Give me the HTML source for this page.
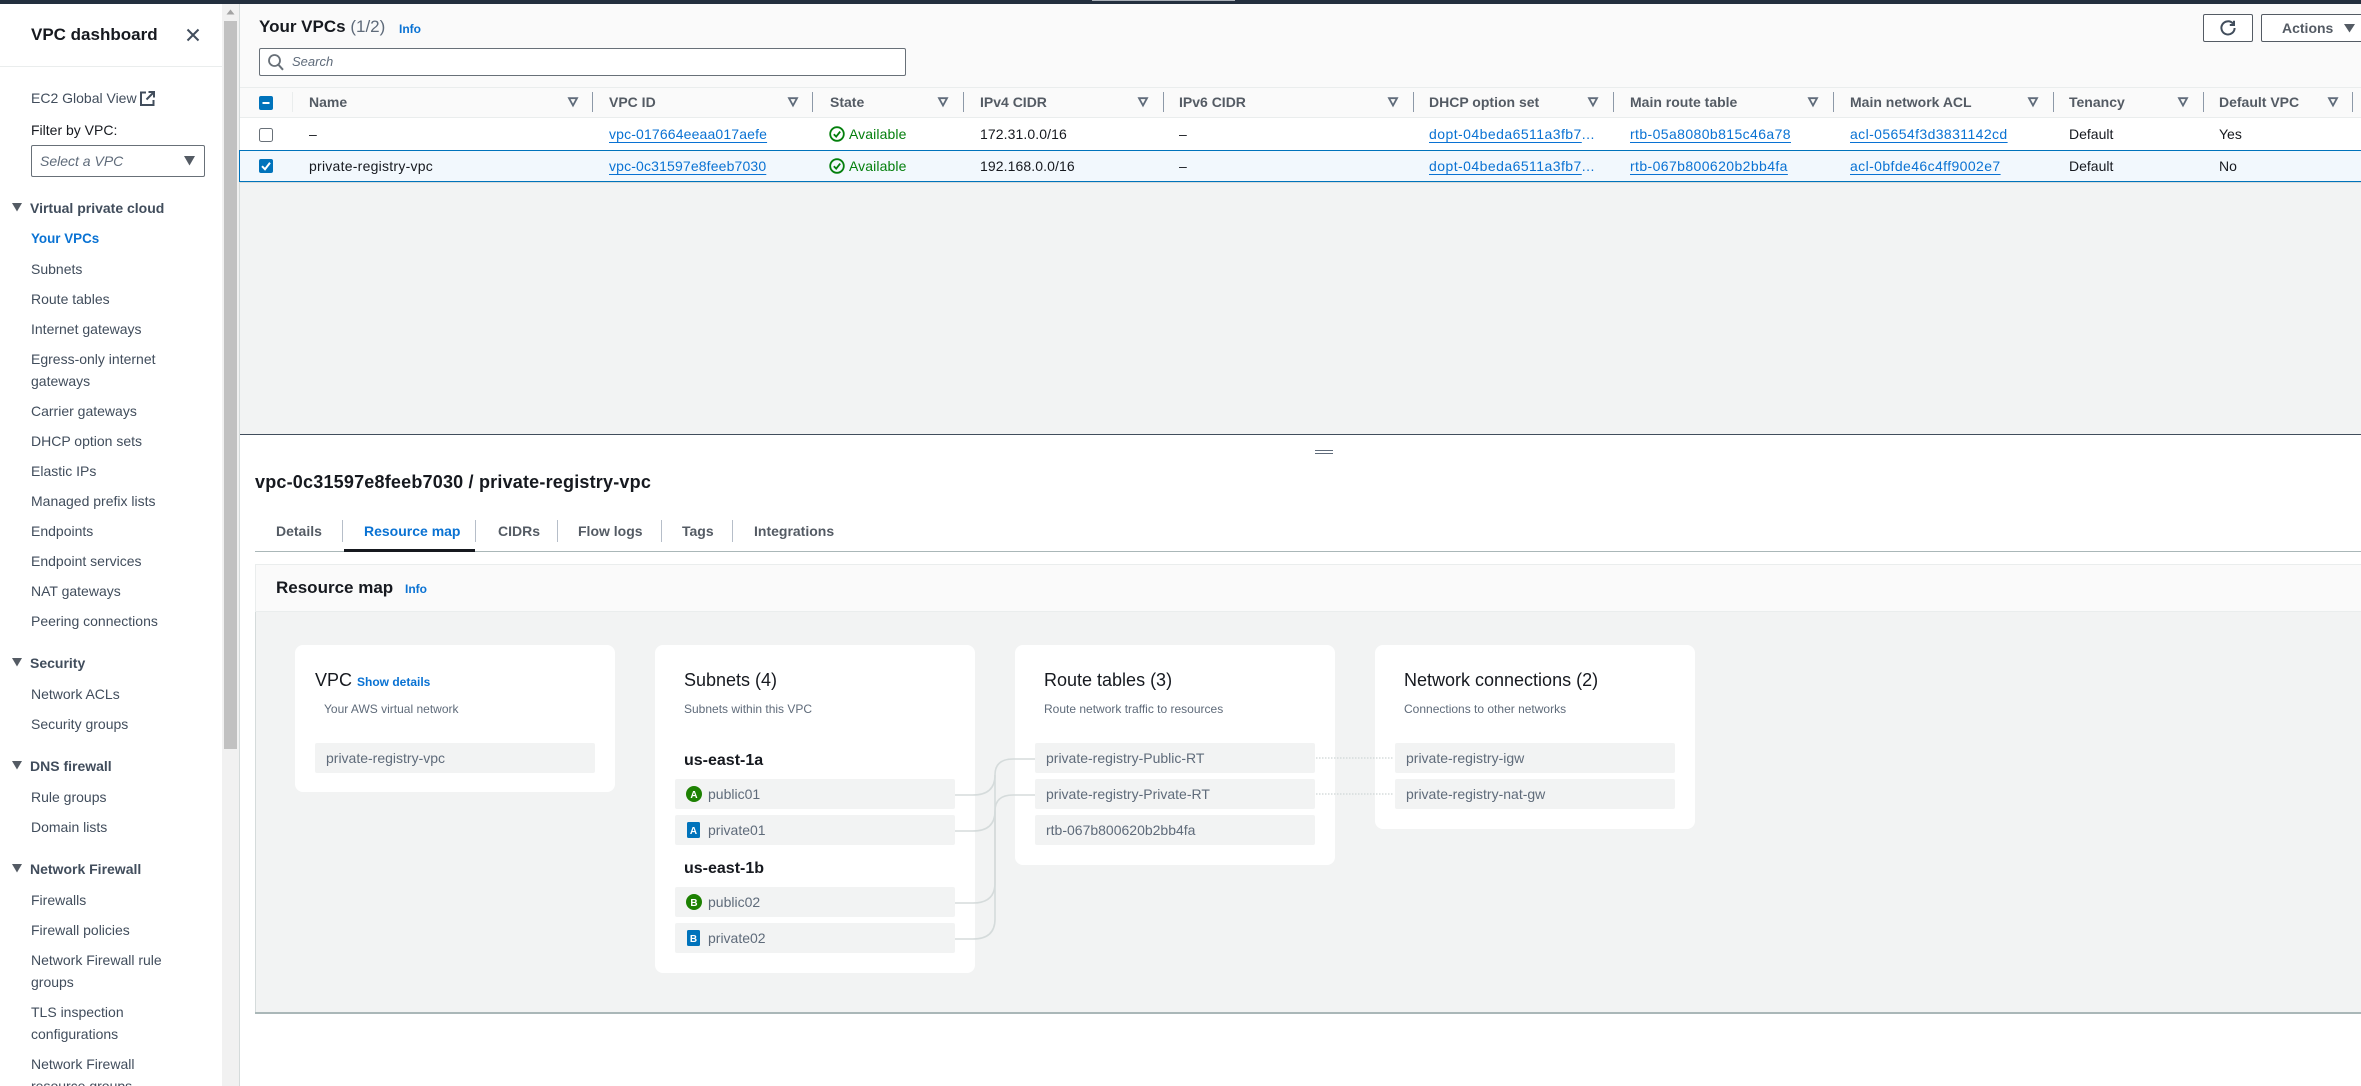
<!DOCTYPE html>
<html lang="en"><head><meta charset="utf-8"><title>Your VPCs</title>
<style>
html,body{margin:0;padding:0;width:2361px;height:1086px;overflow:hidden;background:#fff}
body{position:relative;font-family:"Liberation Sans",Arial,sans-serif;font-size:14px;color:#16191f}
.b{position:absolute}
.t{position:absolute;white-space:nowrap;line-height:20px;height:20px}
.n{color:#414d5c}
.h{font-weight:700;color:#414d5c}
.th{font-weight:700;color:#545b64;top:92px}
a{color:#0972d3;text-decoration:underline;text-underline-offset:3px}
.l{color:#0972d3}
.r1{top:124px}.r2{top:156px}
.ok{color:#037f0c}
.row{position:absolute;background:#f2f3f3;height:30px;border-radius:2px}
.card{position:absolute;background:#fff;border-radius:8px;width:320px}
.rt{color:#5f6b7a}
.ct{font-size:18px;line-height:24px;height:24px;color:#16191f}
.cs{font-size:12px;color:#5f6b7a}
.az{font-size:16px;font-weight:700;color:#16191f}
.sep{position:absolute;top:92px;width:1px;height:20px;background:#8d99a8}
.tsep{position:absolute;top:520px;width:1px;height:22px;background:#b6bec9}
.tab{top:521px;font-weight:700;color:#545b64}
svg{position:absolute;overflow:visible}
</style></head><body>

<!-- top bar -->
<div class="b" style="left:0;top:0;width:2361px;height:4px;background:#232f3e"></div>
<div class="b" style="left:1092px;top:0;width:143px;height:1px;background:#aab0b8"></div>

<!-- sidebar -->
<div class="b" style="left:0;top:4px;width:222px;height:1082px;background:#fff"></div>
<div class="b" style="left:222px;top:4px;width:17px;height:1082px;background:#f1f1f1"></div>
<div class="b" style="left:224px;top:21px;width:13px;height:728px;background:#c1c1c1"></div>
<svg style="left:226px;top:9px" width="9" height="6"><path d="M4.5 0.5L8.5 5.5H0.5Z" fill="#a3a3a3"/></svg>
<div class="b" style="left:239px;top:4px;width:1px;height:1082px;background:#d5dbdb"></div>

<div class="t" style="left:31px;top:25px;font-size:17px;font-weight:700;color:#16191f">VPC dashboard</div>
<svg style="left:186px;top:28px" width="14" height="14"><path d="M1.5 1.5L12.5 12.5M12.5 1.5L1.5 12.5" stroke="#414d5c" stroke-width="2" fill="none"/></svg>
<div class="b" style="left:0;top:66px;width:222px;height:1px;background:#eaeded"></div>

<div class="t n" style="left:31px;top:88px">EC2 Global View</div>
<svg style="left:140px;top:91px" width="15" height="15"><path d="M6 1.5H1V14H13.5V9M8.5 1H14V6.5M14 1L6.5 8.5" stroke="#414d5c" stroke-width="2" fill="none"/></svg>
<div class="t" style="left:31px;top:120px;color:#16191f">Filter by VPC:</div>
<div class="b" style="left:31px;top:145px;width:172px;height:30px;border:1px solid #687078;border-radius:2px;background:#fff"></div>
<div class="t" style="left:40px;top:151px;font-style:italic;color:#5f6b7a">Select a VPC</div>
<svg style="left:184px;top:156px" width="11" height="10"><path d="M0 0H11L5.5 9.5Z" fill="#545b64"/></svg>

<svg style="left:12px;top:203px" width="10" height="9"><path d="M0 0H10L5 8.5Z" fill="#545b64"/></svg>
<div class="t h" style="left:30px;top:198px">Virtual private cloud</div>
<div class="t" style="left:31px;top:229px;color:#0972d3;font-weight:700;font-size:13.4px">Your VPCs</div>
<div class="t n" style="left:31px;top:259px">Subnets</div>
<div class="t n" style="left:31px;top:289px">Route tables</div>
<div class="t n" style="left:31px;top:319px">Internet gateways</div>
<div class="t n" style="left:31px;top:349px">Egress-only internet</div>
<div class="t n" style="left:31px;top:371px">gateways</div>
<div class="t n" style="left:31px;top:401px">Carrier gateways</div>
<div class="t n" style="left:31px;top:431px">DHCP option sets</div>
<div class="t n" style="left:31px;top:461px">Elastic IPs</div>
<div class="t n" style="left:31px;top:491px">Managed prefix lists</div>
<div class="t n" style="left:31px;top:521px">Endpoints</div>
<div class="t n" style="left:31px;top:551px">Endpoint services</div>
<div class="t n" style="left:31px;top:581px">NAT gateways</div>
<div class="t n" style="left:31px;top:611px">Peering connections</div>

<svg style="left:12px;top:658px" width="10" height="9"><path d="M0 0H10L5 8.5Z" fill="#545b64"/></svg>
<div class="t h" style="left:30px;top:653px">Security</div>
<div class="t n" style="left:31px;top:684px">Network ACLs</div>
<div class="t n" style="left:31px;top:714px">Security groups</div>

<svg style="left:12px;top:761px" width="10" height="9"><path d="M0 0H10L5 8.5Z" fill="#545b64"/></svg>
<div class="t h" style="left:30px;top:756px">DNS firewall</div>
<div class="t n" style="left:31px;top:787px">Rule groups</div>
<div class="t n" style="left:31px;top:817px">Domain lists</div>

<svg style="left:12px;top:864px" width="10" height="9"><path d="M0 0H10L5 8.5Z" fill="#545b64"/></svg>
<div class="t h" style="left:30px;top:859px">Network Firewall</div>
<div class="t n" style="left:31px;top:890px">Firewalls</div>
<div class="t n" style="left:31px;top:920px">Firewall policies</div>
<div class="t n" style="left:31px;top:950px">Network Firewall rule</div>
<div class="t n" style="left:31px;top:972px">groups</div>
<div class="t n" style="left:31px;top:1002px">TLS inspection</div>
<div class="t n" style="left:31px;top:1024px">configurations</div>
<div class="t n" style="left:31px;top:1054px">Network Firewall</div>
<div class="t n" style="left:31px;top:1076px">resource groups</div>

<!-- top panel -->
<div class="b" style="left:240px;top:4px;width:2121px;height:83px;background:#fafafa"></div>
<div class="t" style="left:259px;top:17px;font-size:17px;font-weight:700;color:#16191f">Your VPCs <span style="font-weight:400;color:#5f6b7a">(1/2)</span></div>
<div class="t" style="left:399px;top:19px;font-size:12px;font-weight:700;color:#0972d3">Info</div>

<div class="b" style="left:2203px;top:14px;width:48px;height:26px;border:1px solid #545b64;border-radius:2px;background:#fff"></div>
<svg style="left:2220px;top:20px" width="16" height="16"><path d="M13 3.6A6.6 6.6 0 1 0 14.6 8" stroke="#414d5c" stroke-width="2" fill="none"/><path d="M14 0.8V5H9.8" stroke="#414d5c" stroke-width="2" fill="none"/></svg>
<div class="b" style="left:2261px;top:14px;width:110px;height:26px;border:1px solid #545b64;border-radius:2px;background:#fff"></div>
<div class="t" style="left:2282px;top:18px;font-weight:700;color:#545b64">Actions</div>
<svg style="left:2344px;top:24px" width="11" height="9"><path d="M0 0H11L5.5 8.5Z" fill="#545b64"/></svg>

<div class="b" style="left:259px;top:48px;width:645px;height:26px;border:1px solid #687078;border-radius:2px;background:#fff"></div>
<svg style="left:268px;top:54px" width="16" height="17"><circle cx="6.5" cy="6.5" r="5.5" stroke="#687078" stroke-width="1.8" fill="none"/><path d="M10.5 10.8L15 15.8" stroke="#687078" stroke-width="2" fill="none"/></svg>
<div class="t" style="left:292px;top:52px;font-style:italic;color:#5f6b7a;font-size:13px">Search</div>

<!-- table -->
<div class="b" style="left:240px;top:87px;width:2121px;height:31px;background:#fafafa;border-top:1px solid #eaeded;border-bottom:1px solid #eaeded;box-sizing:border-box"></div>
<div class="b" style="left:240px;top:118px;width:2121px;height:32px;background:#fff"></div>
<div class="b" style="left:240px;top:182px;width:2121px;height:252px;background:#f2f3f3"></div>
<div class="b" style="left:239px;top:150px;width:2122px;height:32px;background:#f2f8fd;border-top:1.5px solid #0073bb;border-bottom:1.5px solid #0073bb;border-left:1.5px solid #0073bb;box-sizing:border-box"></div>
<div class="b" style="left:240px;top:182px;width:2121px;height:1px;background:#d5dbdb"></div>
<div class="b" style="left:240px;top:434px;width:2121px;height:1px;background:#414d5c"></div>

<svg style="left:259px;top:96px" width="14" height="14"><rect width="14" height="14" rx="2" fill="#0073bb"/><path d="M3.5 7H10.5" stroke="#fff" stroke-width="2"/></svg>
<svg style="left:259px;top:128px" width="14" height="14"><rect x="0.5" y="0.5" width="13" height="13" rx="2" fill="#fff" stroke="#687078"/></svg>
<svg style="left:259px;top:159px" width="14" height="14"><rect width="14" height="14" rx="2" fill="#0073bb"/><path d="M3 7.2L6 10.2L11 3.8" stroke="#fff" stroke-width="2" fill="none"/></svg>
<div class="b" style="left:292px;top:92px;width:1px;height:20px;background:#eaeded"></div>

<div class="t th" style="left:309px">Name</div>
<div class="t th" style="left:609px">VPC ID</div>
<div class="t th" style="left:830px">State</div>
<div class="t th" style="left:980px">IPv4 CIDR</div>
<div class="t th" style="left:1179px">IPv6 CIDR</div>
<div class="t th" style="left:1429px">DHCP option set</div>
<div class="t th" style="left:1630px">Main route table</div>
<div class="t th" style="left:1850px">Main network ACL</div>
<div class="t th" style="left:2069px">Tenancy</div>
<div class="t th" style="left:2219px">Default VPC</div>

<div class="sep" style="left:592px"></div><div class="sep" style="left:812px"></div><div class="sep" style="left:963px"></div><div class="sep" style="left:1163px"></div><div class="sep" style="left:1413px"></div><div class="sep" style="left:1613px"></div><div class="sep" style="left:1833px"></div><div class="sep" style="left:2053px"></div><div class="sep" style="left:2203px"></div><div class="sep" style="left:2352px"></div>

<svg style="left:568px;top:97px" width="10" height="10"><path d="M1 1.2H9L5 8.5Z" stroke="#5f6b7a" stroke-width="1.8" fill="none"/></svg>
<svg style="left:788px;top:97px" width="10" height="10"><path d="M1 1.2H9L5 8.5Z" stroke="#5f6b7a" stroke-width="1.8" fill="none"/></svg>
<svg style="left:938px;top:97px" width="10" height="10"><path d="M1 1.2H9L5 8.5Z" stroke="#5f6b7a" stroke-width="1.8" fill="none"/></svg>
<svg style="left:1138px;top:97px" width="10" height="10"><path d="M1 1.2H9L5 8.5Z" stroke="#5f6b7a" stroke-width="1.8" fill="none"/></svg>
<svg style="left:1388px;top:97px" width="10" height="10"><path d="M1 1.2H9L5 8.5Z" stroke="#5f6b7a" stroke-width="1.8" fill="none"/></svg>
<svg style="left:1588px;top:97px" width="10" height="10"><path d="M1 1.2H9L5 8.5Z" stroke="#5f6b7a" stroke-width="1.8" fill="none"/></svg>
<svg style="left:1808px;top:97px" width="10" height="10"><path d="M1 1.2H9L5 8.5Z" stroke="#5f6b7a" stroke-width="1.8" fill="none"/></svg>
<svg style="left:2028px;top:97px" width="10" height="10"><path d="M1 1.2H9L5 8.5Z" stroke="#5f6b7a" stroke-width="1.8" fill="none"/></svg>
<svg style="left:2178px;top:97px" width="10" height="10"><path d="M1 1.2H9L5 8.5Z" stroke="#5f6b7a" stroke-width="1.8" fill="none"/></svg>
<svg style="left:2328px;top:97px" width="10" height="10"><path d="M1 1.2H9L5 8.5Z" stroke="#5f6b7a" stroke-width="1.8" fill="none"/></svg>

<div class="t r1" style="left:309px">–</div>
<div class="t r1 l" style="left:609px;letter-spacing:.15px"><a>vpc-017664eeaa017aefe</a></div>
<svg style="left:829px;top:126px" width="16" height="16"><circle cx="8" cy="8" r="6.8" stroke="#037f0c" stroke-width="1.8" fill="none"/><path d="M4.8 8.2L7.2 10.6L11.2 5.6" stroke="#037f0c" stroke-width="1.8" fill="none"/></svg>
<div class="t r1 ok" style="left:849px;letter-spacing:.1px">Available</div>
<div class="t r1" style="left:980px;letter-spacing:.1px">172.31.0.0/16</div>
<div class="t r1" style="left:1179px">–</div>
<div class="t r1 l" style="left:1429px;letter-spacing:.45px"><a>dopt-04beda6511a3fb7</a>...</div>
<div class="t r1 l" style="left:1630px;letter-spacing:.4px"><a>rtb-05a8080b815c46a78</a></div>
<div class="t r1 l" style="left:1850px;letter-spacing:.4px"><a>acl-05654f3d3831142cd</a></div>
<div class="t r1" style="left:2069px">Default</div>
<div class="t r1" style="left:2219px">Yes</div>

<div class="t r2" style="left:309px;letter-spacing:.25px">private-registry-vpc</div>
<div class="t r2 l" style="left:609px;letter-spacing:.15px"><a>vpc-0c31597e8feeb7030</a></div>
<svg style="left:829px;top:158px" width="16" height="16"><circle cx="8" cy="8" r="6.8" stroke="#037f0c" stroke-width="1.8" fill="none"/><path d="M4.8 8.2L7.2 10.6L11.2 5.6" stroke="#037f0c" stroke-width="1.8" fill="none"/></svg>
<div class="t r2 ok" style="left:849px;letter-spacing:.1px">Available</div>
<div class="t r2" style="left:980px;letter-spacing:.1px">192.168.0.0/16</div>
<div class="t r2" style="left:1179px">–</div>
<div class="t r2 l" style="left:1429px;letter-spacing:.45px"><a>dopt-04beda6511a3fb7</a>...</div>
<div class="t r2 l" style="left:1630px;letter-spacing:.4px"><a>rtb-067b800620b2bb4fa</a></div>
<div class="t r2 l" style="left:1850px;letter-spacing:.4px"><a>acl-0bfde46c4ff9002e7</a></div>
<div class="t r2" style="left:2069px">Default</div>
<div class="t r2" style="left:2219px">No</div>

<!-- split handle -->
<div class="b" style="left:1315px;top:450px;width:18px;height:1px;background:#5f6b7a"></div>
<div class="b" style="left:1315px;top:453px;width:18px;height:1px;background:#5f6b7a"></div>

<!-- detail -->
<div class="t" style="left:255px;top:472px;font-size:18px;font-weight:700;letter-spacing:.2px;color:#16191f">vpc-0c31597e8feeb7030 / private-registry-vpc</div>

<div class="t tab" style="left:276px">Details</div>
<div class="tsep" style="left:342px"></div>
<div class="t tab" style="left:364px;color:#0972d3">Resource map</div>
<div class="tsep" style="left:475px"></div>
<div class="t tab" style="left:498px">CIDRs</div>
<div class="tsep" style="left:557px"></div>
<div class="t tab" style="left:578px">Flow logs</div>
<div class="tsep" style="left:661px"></div>
<div class="t tab" style="left:682px">Tags</div>
<div class="tsep" style="left:732px"></div>
<div class="t tab" style="left:754px">Integrations</div>
<div class="b" style="left:255px;top:551px;width:2106px;height:1px;background:#aab7b8"></div>
<div class="b" style="left:344px;top:549px;width:131px;height:3px;background:#16191f"></div>

<!-- resource map container -->
<div class="b" style="left:255px;top:564px;width:2106px;height:449px;background:#f2f3f3;box-sizing:border-box;border-left:1px solid #d5dbdb"></div>
<div class="b" style="left:255px;top:564px;width:2106px;height:48px;background:#fafafa;box-sizing:border-box;border:1px solid #eaeded;border-right:none"></div>
<div class="b" style="left:255px;top:1012px;width:2106px;height:2px;background:#aab7b8"></div>
<div class="t" style="left:276px;top:578px;font-size:17px;font-weight:700;color:#16191f">Resource map</div>
<div class="t" style="left:405px;top:579px;font-size:12px;font-weight:700;color:#0972d3">Info</div>

<!-- cards -->
<div class="card" style="left:295px;top:645px;height:147px"></div>
<div class="card" style="left:655px;top:645px;height:328px"></div>
<div class="card" style="left:1015px;top:645px;height:220px"></div>
<div class="card" style="left:1375px;top:645px;height:184px"></div>

<div class="t ct" style="left:315px;top:668px">VPC</div>
<div class="t" style="left:357px;top:672px;font-size:12px;font-weight:700;color:#0972d3">Show details</div>
<div class="t cs" style="left:324px;top:699px">Your AWS virtual network</div>
<div class="row" style="left:315px;top:743px;width:280px"></div>
<div class="t rt" style="left:326px;top:748px">private-registry-vpc</div>

<div class="t ct" style="left:684px;top:668px">Subnets (4)</div>
<div class="t cs" style="left:684px;top:699px">Subnets within this VPC</div>
<div class="t az" style="left:684px;top:751px">us-east-1a</div>
<div class="row" style="left:675px;top:779px;width:280px"></div>
<div class="row" style="left:675px;top:815px;width:280px"></div>
<div class="t az" style="left:684px;top:859px">us-east-1b</div>
<div class="row" style="left:675px;top:887px;width:280px"></div>
<div class="row" style="left:675px;top:923px;width:280px"></div>
<div class="t rt" style="left:708px;top:784px">public01</div>
<div class="t rt" style="left:708px;top:820px">private01</div>
<div class="t rt" style="left:708px;top:892px">public02</div>
<div class="t rt" style="left:708px;top:928px">private02</div>
<svg style="left:686px;top:786px" width="16" height="16"><circle cx="8" cy="8" r="8" fill="#1d8102"/><text x="8" y="12" font-family="Liberation Sans" font-size="10" font-weight="700" fill="#fff" text-anchor="middle">A</text></svg>
<svg style="left:687px;top:822px" width="13" height="16"><rect width="13" height="16" rx="1.5" fill="#0073bb"/><text x="6.5" y="12" font-family="Liberation Sans" font-size="10" font-weight="700" fill="#fff" text-anchor="middle">A</text></svg>
<svg style="left:686px;top:894px" width="16" height="16"><circle cx="8" cy="8" r="8" fill="#1d8102"/><text x="8" y="12" font-family="Liberation Sans" font-size="10" font-weight="700" fill="#fff" text-anchor="middle">B</text></svg>
<svg style="left:687px;top:930px" width="13" height="16"><rect width="13" height="16" rx="1.5" fill="#0073bb"/><text x="6.5" y="12" font-family="Liberation Sans" font-size="10" font-weight="700" fill="#fff" text-anchor="middle">B</text></svg>

<div class="t ct" style="left:1044px;top:668px">Route tables (3)</div>
<div class="t cs" style="left:1044px;top:699px">Route network traffic to resources</div>
<div class="row" style="left:1035px;top:743px;width:280px"></div>
<div class="row" style="left:1035px;top:779px;width:280px"></div>
<div class="row" style="left:1035px;top:815px;width:280px"></div>
<div class="t rt" style="left:1046px;top:748px">private-registry-Public-RT</div>
<div class="t rt" style="left:1046px;top:784px">private-registry-Private-RT</div>
<div class="t rt" style="left:1046px;top:820px">rtb-067b800620b2bb4fa</div>

<div class="t ct" style="left:1404px;top:668px">Network connections (2)</div>
<div class="t cs" style="left:1404px;top:699px">Connections to other networks</div>
<div class="row" style="left:1395px;top:743px;width:280px"></div>
<div class="row" style="left:1395px;top:779px;width:280px"></div>
<div class="t rt" style="left:1406px;top:748px">private-registry-igw</div>
<div class="t rt" style="left:1406px;top:784px">private-registry-nat-gw</div>

<!-- connectors -->
<svg style="left:0;top:0" width="2361" height="1086" fill="none">
<g stroke="#d5dbdb" stroke-width="1.6">
<path d="M955 795H973Q995 795 995 775Q995 759 1013 759H1035"/>
<path d="M955 831H973Q995 831 995 811Q995 795 1013 795H1035"/>
<path d="M955 903H973Q995 903 995 883V775"/>
<path d="M955 939H973Q995 939 995 919V811"/>
</g>
<g stroke="#d5dbdb" stroke-width="1.6" stroke-dasharray="1.5 1.5">
<path d="M1316 758H1394"/>
<path d="M1316 794H1394"/>
</g>
</svg>
</body></html>
